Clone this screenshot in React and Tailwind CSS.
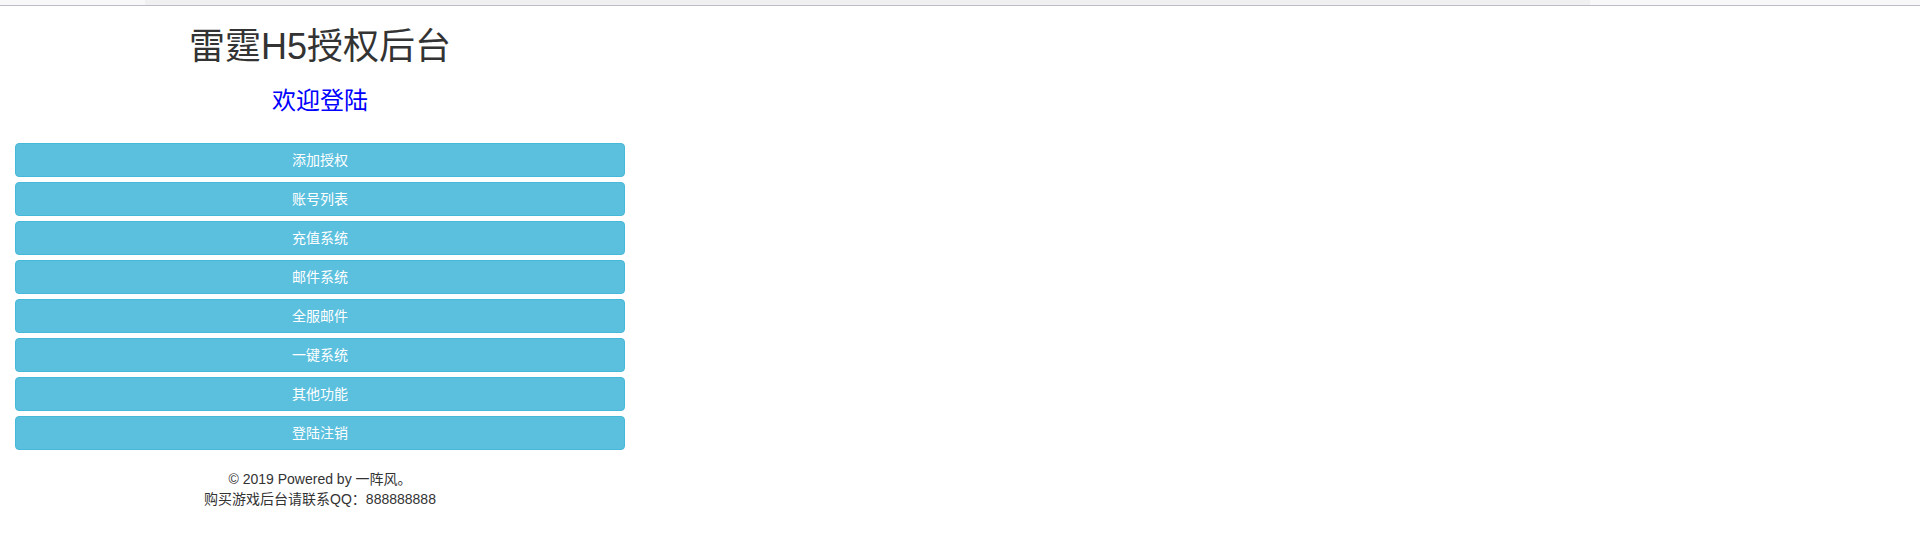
import React from "react";

const items = ["添加授权", "账号列表", "充值系统", "邮件系统", "全服邮件", "一键系统", "其他功能", "登陆注销"];

export default function App() {
  return (
    <div className="min-h-screen bg-white font-['Liberation_Sans','Noto_Sans_CJK_SC',sans-serif] text-[#333]">
      <div className="flex h-[5px]">
        <div className="w-[145px] bg-[#f8f8f8]" />
        <div className="flex-1 bg-[#f0f0f0]" />
        <div className="w-[330px] bg-[#f8f8f8]" />
      </div>
      <div className="h-px bg-[#bdbcc7]" />
      <div className="w-[640px] px-[15px]">
        <h1 className="mt-[21px] text-center text-[36px] font-normal leading-[39.6px]">雷霆H5授权后台</h1>
        <h3 className="mt-[21px] text-center text-[24px] font-normal leading-[26.4px] text-[#0000ff]">欢迎登陆</h3>
        <div className="mt-[29px] flex flex-col gap-[5px]">
          {items.map((t) => (
            <button
              key={t}
              className="h-[34px] w-full rounded-[4px] border border-[#46b8da] bg-[#5bc0de] px-3 text-center text-[14px] leading-[20px] text-white"
            >
              {t}
            </button>
          ))}
        </div>
        <div className="mt-[19px] text-center text-[14px] leading-[20px] text-[#333]">
          <p>© 2019 Powered by 一阵风。</p>
          <p>购买游戏后台请联系QQ：888888888</p>
        </div>
      </div>
    </div>
  );
}
